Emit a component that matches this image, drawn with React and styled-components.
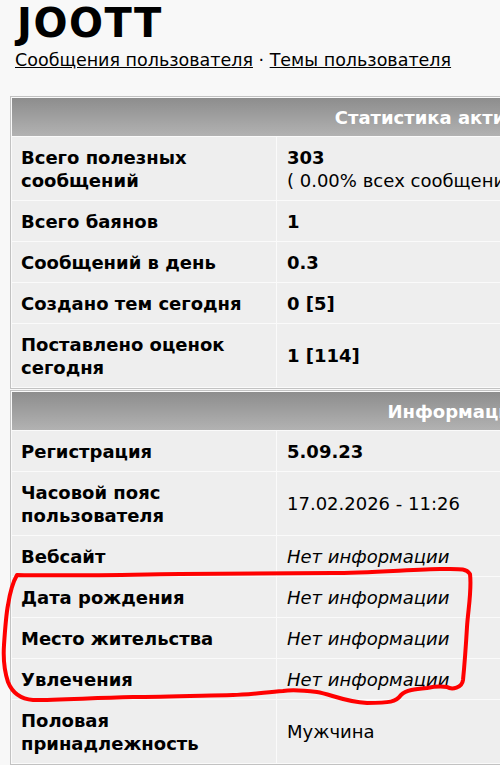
import React from "react";
import styled, { createGlobalStyle } from "styled-components";

const GlobalStyle = createGlobalStyle`
  html, body {
    margin: 0;
    padding: 0;
    overflow: hidden;
    background: #f8f8f8;
  }
  body {
    font-family: "DejaVu Sans", Verdana, sans-serif;
    color: #000;
  }
`;

const Page = styled.div`
  position: relative;
  padding: 0 10px;
  width: 900px;
`;

const Title = styled.h1`
  margin: 0 0 0 7px;
  padding: 0;
  font-size: 40px;
  line-height: 47px;
  font-weight: bold;
  letter-spacing: 1.5px;
`;

const Links = styled.div`
  margin: 2px 0 0 5px;
  font-size: 17.5px;
  line-height: 22px;

  a {
    color: #000;
    text-decoration: underline;
  }
`;

const Table = styled.table`
  width: 890px;
  border: 1px solid #c2c2c2;
  border-spacing: 1px;
  background: #fafafa;
  margin-top: ${(p) => p.$top || 0}px;
  font-size: 18px;
  line-height: 23px;
`;

const Head = styled.th`
  height: 38px;
  padding: 0;
  background: linear-gradient(#8d8d8d, #b2b2b2);
  color: #fff;
  font-size: 18px;
  font-weight: bold;
  text-align: center;
`;

const Label = styled.td`
  width: 246px;
  padding: 8.5px 9px;
  background: #eeeeee;
  font-weight: bold;
  vertical-align: middle;
`;

const Value = styled.td`
  padding: 8.5px 10px;
  background: #eeeeee;
  vertical-align: middle;
  white-space: nowrap;
  font-weight: ${(p) => (p.$bold ? "bold" : "normal")};
  font-style: ${(p) => (p.$italic ? "italic" : "normal")};
`;

const Note = styled.span`
  font-weight: normal;
`;

const Scribble = styled.svg`
  position: absolute;
  left: 0;
  top: 0;
  pointer-events: none;
`;

const stats = [
  { label: "Всего полезных сообщений", value: "303", note: "( 0.00% всех сообщений )" },
  { label: "Всего баянов", value: "1" },
  { label: "Сообщений в день", value: "0.3" },
  { label: "Создано тем сегодня", value: "0 [5]" },
  { label: "Поставлено оценок сегодня", value: "1 [114]" },
];

const info = [
  { label: "Регистрация", value: "5.09.23", bold: true },
  { label: "Часовой пояс пользователя", value: "17.02.2026 - 11:26" },
  { label: "Вебсайт", value: "Нет информации", italic: true },
  { label: "Дата рождения", value: "Нет информации", italic: true },
  { label: "Место жительства", value: "Нет информации", italic: true },
  { label: "Увлечения", value: "Нет информации", italic: true },
  { label: "Половая принадлежность", value: "Мужчина" },
];

const App = () => (
  <>
    <GlobalStyle />
    <Page>
      <Title>JOOTT</Title>
      <Links>
        <a href="#">Сообщения пользователя</a> · <a href="#">Темы пользователя</a>
      </Links>

      <Table $top={25}>
        <thead>
          <tr>
            <Head colSpan={2}>Статистика активности</Head>
          </tr>
        </thead>
        <tbody>
          {stats.map((row, i) => (
            <tr key={i}>
              <Label>{row.label}</Label>
              <Value $bold>
                {row.value}
                {row.note && (
                  <>
                    <br />
                    <Note>{row.note}</Note>
                  </>
                )}
              </Value>
            </tr>
          ))}
        </tbody>
      </Table>

      <Table $top={1}>
        <thead>
          <tr>
            <Head colSpan={2}>Информация</Head>
          </tr>
        </thead>
        <tbody>
          {info.map((row, i) => (
            <tr key={i}>
              <Label>{row.label}</Label>
              <Value $bold={row.bold} $italic={row.italic}>
                {row.value}
              </Value>
            </tr>
          ))}
        </tbody>
      </Table>

      <Scribble width="500" height="765" viewBox="0 0 500 765">
        <path
          d="M17 575 C 60 576, 100 575, 180 574 S 300 573, 333 573 S 420 569, 440 569 S 466 568, 470 574 C 472 590, 468 610, 467 627 S 464 670, 463 680 C 462 688, 452 690, 447 687 C 440 686, 432 687, 427 688 C 415 689, 406 690, 401 695 C 396 702, 390 703, 367 703 C 345 702, 330 694, 317 692 C 300 690, 290 690, 283 691 C 260 693, 245 695, 233 695 C 190 696, 160 697, 133 697 C 90 698, 60 700, 33 700 C 20 699, 12 692, 8 682 C 4 670, 3 660, 4 645 C 5 630, 6 615, 8 605 C 10 592, 13 582, 17 575 Z"
          fill="none"
          stroke="#ff0000"
          strokeWidth="4"
          strokeLinecap="round"
          strokeLinejoin="round"
        />
      </Scribble>
    </Page>
  </>
);

export default App;
